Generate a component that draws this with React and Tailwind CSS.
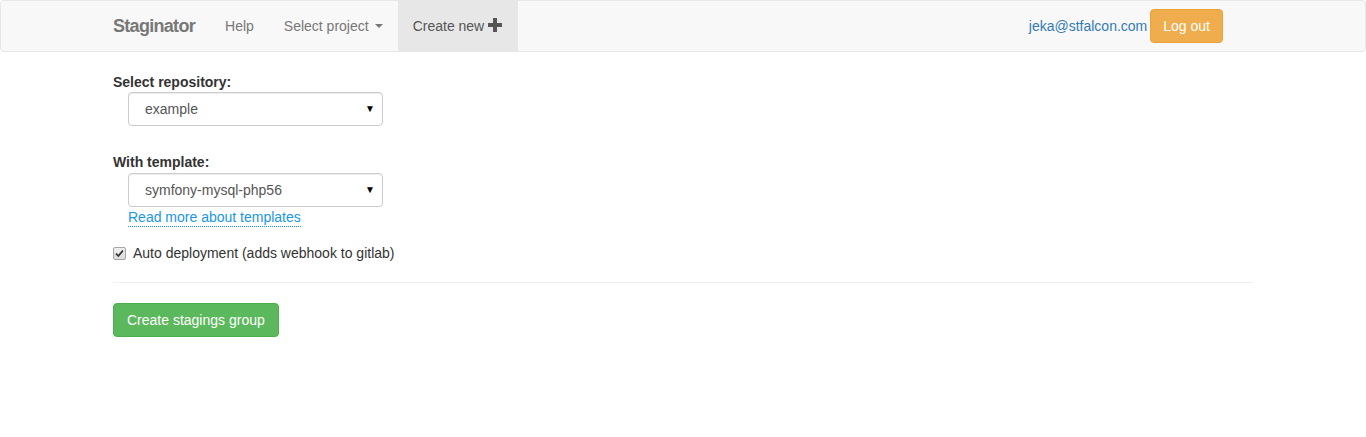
import React from 'react';

const font = { fontFamily: '"Liberation Sans", Arial, sans-serif' };

const Caret = () => (
    <span className="inline-block ml-[6px] w-0 h-0 border-l-[4px] border-r-[4px] border-t-[4px] border-l-transparent border-r-transparent border-t-[#777] align-middle" />
);

const PlusIcon = () => (
    <svg width="14" height="14" viewBox="0 0 14 14" className="inline-block ml-[4px] -mt-[2px] align-middle">
        <path d="M5 0h4v5h5v4H9v5H5V9H0V5h5z" fill="#555" />
    </svg>
);

const SelectBox = ({ value }) => (
    <div className="ml-[15px] w-[255px] h-[34px] border border-[#ccc] rounded-[4px] bg-white flex items-center pl-[16px] pr-[7px] text-[14px] text-[#555] shadow-[inset_0_1px_1px_rgba(0,0,0,0.075)]">
        <span className="flex-1">{value}</span>
        <span className="text-[10px] text-black">▼</span>
    </div>
);

// greyed native-looking checkbox
const CheckBox = () => (
    <span className="w-[13px] h-[13px] border border-[#a5a5a5] rounded-[2px] bg-gradient-to-b from-[#f0f0f0] to-[#dcdcdc] flex items-center justify-center">
        <svg width="9" height="9" viewBox="0 0 9 9">
            <path d="M1 4.5l2.3 2.5L8 1.5" stroke="#333" strokeWidth="1.8" fill="none" />
        </svg>
    </span>
);

const App = () => {
    return (
        <div className="min-h-[437px] bg-white text-[14px] text-[#333] leading-[20px]" style={font}>
            {/* Navbar */}
            <div className="h-[52px] border border-[#e7e7e7] bg-[#f8f8f8] rounded-[4px]">
                <div className="w-[1170px] mx-auto px-[15px] flex h-[50px]">
                    <a className="-ml-[15px] px-[15px] h-[50px] flex items-center text-[18px] font-bold tracking-[-0.7px] text-[#777]">Staginator</a>
                    <a className="px-[15px] h-[50px] flex items-center text-[#777]">Help</a>
                    <a className="px-[15px] h-[50px] flex items-center text-[#777]">Select project<Caret /></a>
                    <a className="px-[15px] w-[120px] h-[50px] flex items-center bg-[#e7e7e7] text-[#555]">Create new<PlusIcon /></a>
                    <div className="ml-auto flex items-center mr-[30px]">
                        <a className="text-[#337ab7]">jeka@stfalcon.com</a>
                        <button className="ml-[3px] h-[34px] px-[12px] rounded-[4px] bg-[#f0ad4e] border border-[#eea236] text-white text-[14px]">Log out</button>
                    </div>
                </div>
            </div>

            {/* Form */}
            <div className="w-[1170px] mx-auto px-[15px] pt-[20px]">
                <label className="block font-bold">Select repository:</label>
                <SelectBox value="example" />

                <label className="block font-bold mt-[26px]">With template:</label>
                <div className="mt-[1px]">
                    <SelectBox value="symfony-mysql-php56" />
                </div>
                <a className="inline-block ml-[15px] text-[#1a96e6] border-b border-dotted border-[#1a96e6] leading-[18px] mt-[1px]">Read more about templates</a>

                <div className="flex items-center mt-[16px] h-[20px]">
                    <CheckBox />
                    <span className="ml-[7px]">Auto deployment (adds webhook to gitlab)</span>
                </div>

                <hr className="mt-[19px] mb-[20px] border-t border-[#eee]" />

                <button className="h-[34px] px-[13px] rounded-[4px] bg-[#5cb85c] border border-[#4cae4c] text-white text-[14px]">Create stagings group</button>
            </div>
        </div>
    );
};

export default App;
